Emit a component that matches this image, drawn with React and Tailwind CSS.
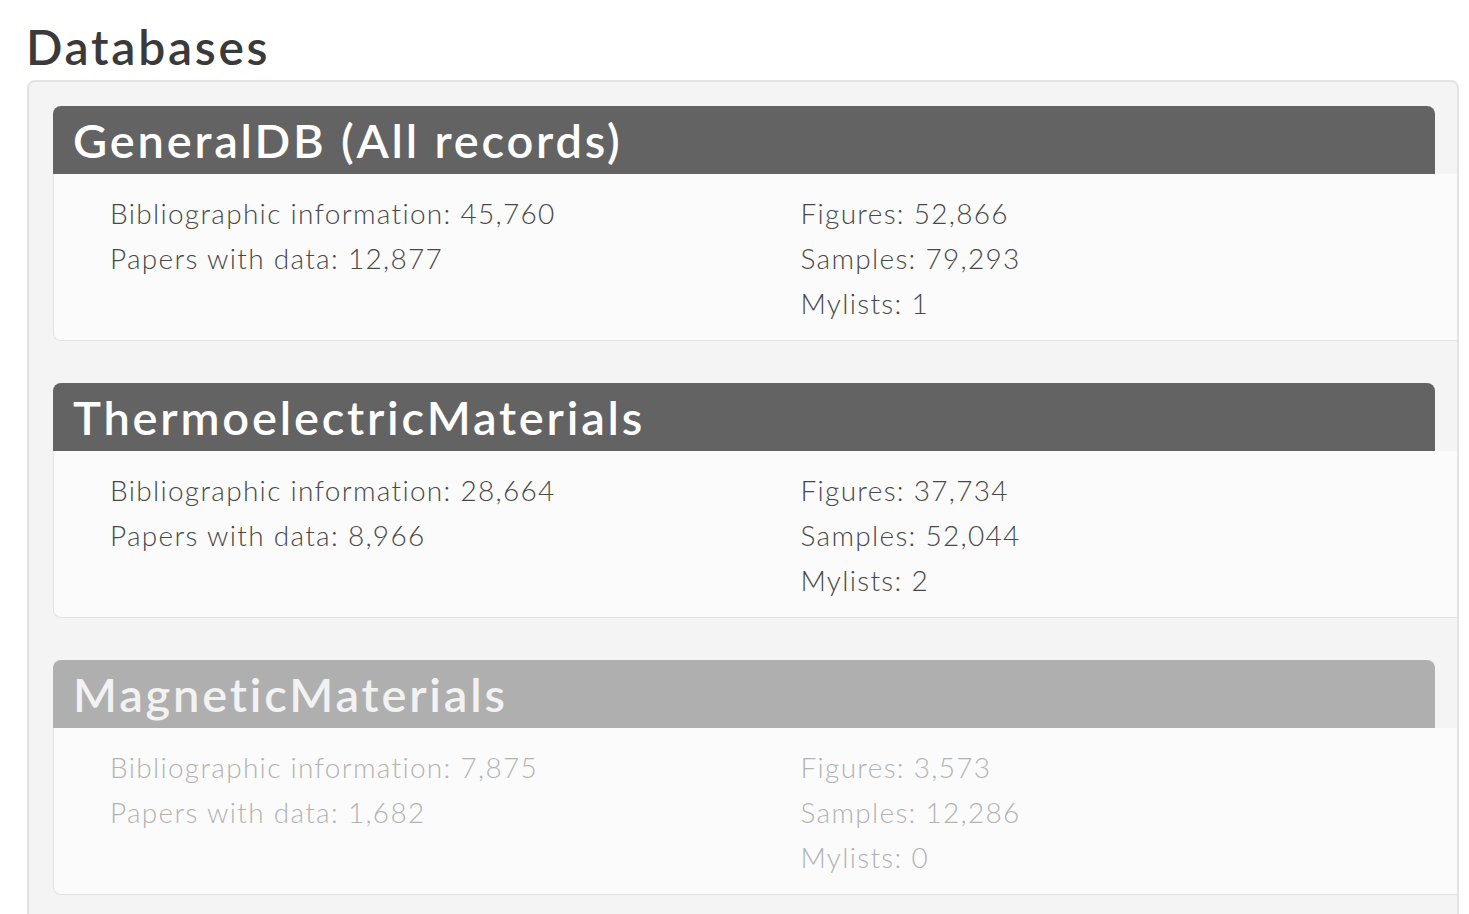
import React from "react";

const databases = [
  {
    name: "GeneralDB (All records)",
    biblio: "45,760",
    papers: "12,877",
    figures: "52,866",
    samples: "79,293",
    mylists: "1",
    enabled: true,
  },
  {
    name: "ThermoelectricMaterials",
    biblio: "28,664",
    papers: "8,966",
    figures: "37,734",
    samples: "52,044",
    mylists: "2",
    enabled: true,
  },
  {
    name: "MagneticMaterials",
    biblio: "7,875",
    papers: "1,682",
    figures: "3,573",
    samples: "12,286",
    mylists: "0",
    enabled: false,
  },
];

const DatabaseCard = ({ db }) => {
  return (
    <div className="mr-[22px]">
      <div
        className={`h-[68px] rounded-t-lg pl-[20px] text-[47px] leading-[68px] font-semibold tracking-[2.8px] ${
          db.enabled ? "bg-[#636363] text-white" : "bg-[#afafaf] text-[#f2f2f2]"
        }`}
      >
        {db.name}
      </div>
      <div
        className={`mr-[-22px] pr-[22px] bg-[#fbfbfb] border-l border-b border-[#e2e2e2] rounded-bl-lg pt-[17px] pb-[14px] text-[28px] leading-[45px] font-light tracking-[1.3px] ${
          db.enabled ? "text-[#484848]" : "text-[#b3b3b3]"
        }`}
      >
        <div className="grid grid-cols-2">
          <div className="pl-[56px]">
            <p>Bibliographic information: {db.biblio}</p>
            <p>Papers with data: {db.papers}</p>
          </div>
          <div className="pl-[56px]">
            <p>Figures: {db.figures}</p>
            <p>Samples: {db.samples}</p>
            <p>Mylists: {db.mylists}</p>
          </div>
        </div>
      </div>
    </div>
  );
};

const App = () => {
  return (
    <div className="h-[914px] overflow-hidden bg-white px-[27px] pr-[10px]" style={{ fontFamily: "Lato, 'Noto Sans', sans-serif" }}>
      <h1 className="pt-[19px] -ml-px mb-[5px] text-[48px] leading-[56px] font-semibold tracking-[2.7px] text-[#3a3a3a]">Databases</h1>
      <div className="border-2 border-[#e3e3e3] rounded-lg bg-[#f4f4f4] pl-[24px] pt-[24px] pb-[40px] flex flex-col gap-[42px]">
        {databases.map((db) => (
          <DatabaseCard key={db.name} db={db} />
        ))}
      </div>
    </div>
  );
};

export default App;
